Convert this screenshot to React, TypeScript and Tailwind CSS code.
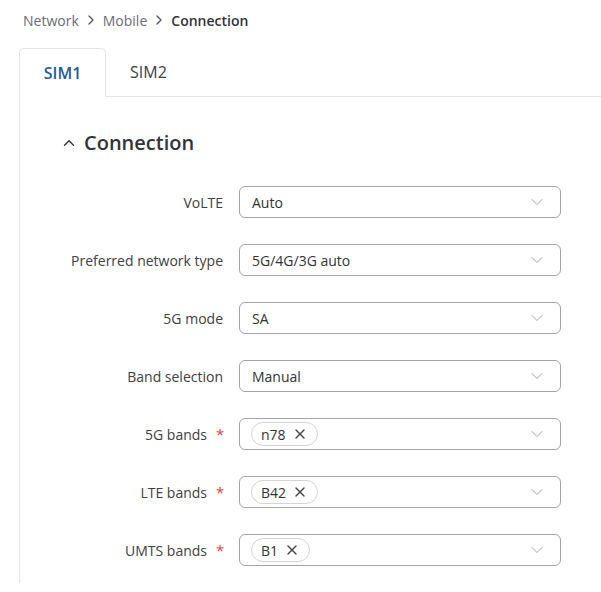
import { ChevronDown, ChevronRight, ChevronUp, X } from "lucide-react";

type Row = {
  label: string;
  value?: string;
  chip?: string;
  required?: boolean;
};

const rows: Row[] = [
  { label: "VoLTE", value: "Auto" },
  { label: "Preferred network type", value: "5G/4G/3G auto" },
  { label: "5G mode", value: "SA" },
  { label: "Band selection", value: "Manual" },
  { label: "5G bands", chip: "n78", required: true },
  { label: "LTE bands", chip: "B42", required: true },
  { label: "UMTS bands", chip: "B1", required: true },
];

export default function App() {
  return (
    <div className="w-[601px] h-[592px] bg-white overflow-hidden font-['Open_Sans',sans-serif] text-[#404040]">
      {/* Breadcrumb */}
      <div className="flex items-center h-[40px] pl-[23px] text-[14px]">
        <span className="text-[#6b6b75]">Network</span>
        <ChevronRight className="w-4 h-4 mx-[4px] text-[#55555c]" strokeWidth={2} />
        <span className="text-[#6b6b75]">Mobile</span>
        <ChevronRight className="w-4 h-4 mx-[4px] text-[#55555c]" strokeWidth={2} />
        <span className="font-semibold text-[#333338]">Connection</span>
      </div>

      <div className="ml-[19px] mt-[8px]">
        {/* Tabs */}
        <div className="flex h-[49px]">
          <div className="w-[87px] border border-b-0 border-[#e2e4e8] rounded-t-[5px] flex items-center justify-center text-[16px] font-semibold text-[#1d5b99] bg-white">
            SIM1
          </div>
          <div className="flex-1 border-b border-[#e2e4e8] flex items-center pl-[24px] text-[16px] text-[#404040]">
            SIM2
          </div>
        </div>

        {/* Panel */}
        <div className="border-l border-[#e2e4e8] h-[486px]">
          <div className="flex items-center h-[88px] pl-[40px] pt-[3px]">
            <ChevronUp className="w-[18px] h-[18px] text-[#333]" strokeWidth={1.8} />
            <span className="ml-[6px] text-[20px] font-semibold text-[#333338]">Connection</span>
          </div>

          <div className="flex flex-col gap-[26px] pt-[1px]">
            {rows.map((row) => (
              <div key={row.label} className="flex items-center">
                <div className="w-[203px] flex justify-end items-center text-[14px] text-[#404040]">
                  <span>{row.label}</span>
                  {row.required && <span className="ml-[9px] text-[#e0463c] text-[15px] w-[7px]">*</span>}
                </div>
                <div className="ml-[16px] w-[322px] h-[32px] border border-[#a3a3ab] rounded-[6px] flex items-center justify-between pl-[12px] pr-[13px]">
                  {row.chip ? (
                    <span className="flex items-center h-[24px] pl-[9px] pr-[9px] border border-[#d4d4d8] rounded-full text-[14px] text-[#333] -ml-[1px]">
                      {row.chip}
                      <X className="w-[16px] h-[16px] ml-[6px] text-[#444]" strokeWidth={2} />
                    </span>
                  ) : (
                    <span className="text-[14px] text-[#333]">{row.value}</span>
                  )}
                  <ChevronDown className="w-[20px] h-[20px] text-[#9a9aa3]" strokeWidth={1.1} />
                </div>
              </div>
            ))}
          </div>
        </div>
      </div>
    </div>
  );
}
